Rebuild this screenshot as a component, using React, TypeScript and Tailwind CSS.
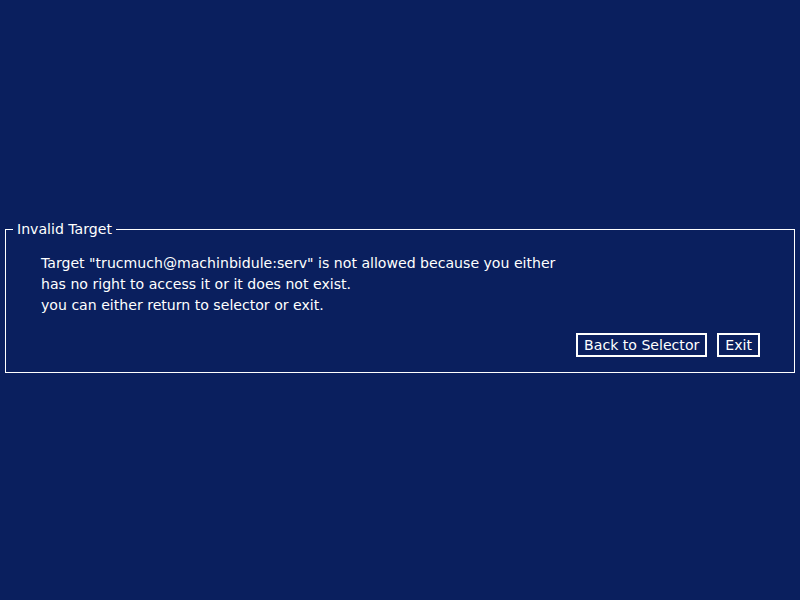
export default function App() {
    return (
        <div className="w-[800px] h-[600px] bg-[#0a1f5e] flex items-center text-white text-[14.1px] font-['DejaVu_Sans',sans-serif]">
            <fieldset className="mx-[5px] mb-[7px] w-full border border-white">
                <legend className="ml-[7px] px-[4px] leading-[17px]">Invalid Target</legend>
                <div className="pl-[35px] pr-[34px] pb-[15px]">
                    <div className="pt-[15px] leading-[21px]">
                        <p>Target "trucmuch@machinbidule:serv" is not allowed because you either</p>
                        <p>has no right to access it or it does not exist.</p>
                        <p>you can either return to selector or exit.</p>
                    </div>
                    <div className="flex justify-end gap-[10px] mt-[17px]">
                        <button className="border-2 border-white px-[6px] h-[24px] leading-[18px]">Back to Selector</button>
                        <button className="border-2 border-white px-[6px] h-[24px] leading-[18px]">Exit</button>
                    </div>
                </div>
            </fieldset>
        </div>
    );
}
